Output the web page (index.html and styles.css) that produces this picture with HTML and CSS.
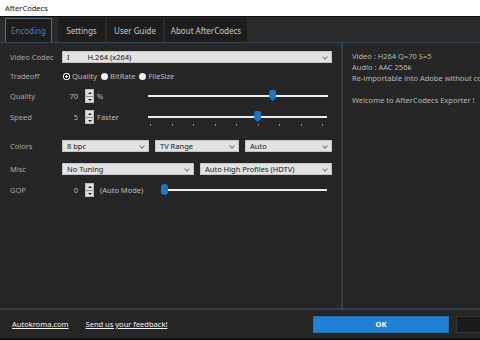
FILE: index.html
```html
<!DOCTYPE html>
<html lang="en">
<head>
    <meta charset="UTF-8">
    <title>AfterCodecs</title>
    <link rel="stylesheet" href="styles.css">
</head>
<body>
    <div class="window">
        <div class="titlebar">AfterCodecs</div>

        <div class="tabs">
            <div class="tab active t-enc">Encoding</div>
            <div class="tab t-set">Settings</div>
            <div class="tab t-guide">User Guide</div>
            <div class="tab t-about">About AfterCodecs</div>
        </div>

        <div class="main">
            <div class="left">
                <div class="row r-codec">
                    <span class="label">Video Codec</span>
                    <div class="select w-full"><span class="sep">I</span><span>H.264 (x264)</span><i class="chev"></i></div>
                </div>

                <div class="row r-trade">
                    <span class="label">Tradeoff</span>
                    <label class="radio-item"><span class="radio on"></span>Quality</label>
                    <label class="radio-item"><span class="radio"></span>BitRate</label>
                    <label class="radio-item"><span class="radio"></span>FileSize</label>
                </div>

                <div class="row r-quality">
                    <span class="label">Quality</span>
                    <span class="num">70</span>
                    <span class="spin"><b class="up"></b><b class="down"></b></span>
                    <span class="unit">%</span>
                    <div class="slider s-quality"><span class="thumb" style="left: 69%"></span></div>
                </div>

                <div class="row r-speed">
                    <span class="label">Speed</span>
                    <span class="num">5</span>
                    <span class="spin"><b class="up"></b><b class="down"></b></span>
                    <span class="unit">Faster</span>
                    <div class="slider s-speed">
                        <span class="thumb" style="left: 61%"></span>
                        <div class="ticks"><i></i><i></i><i></i><i></i><i></i><i></i><i></i><i></i><i></i></div>
                    </div>
                </div>

                <div class="row r-colors">
                    <span class="label">Colors</span>
                    <div class="select w-a"><span>8 bpc</span><i class="chev"></i></div>
                    <div class="select w-b"><span>TV Range</span><i class="chev"></i></div>
                    <div class="select w-c"><span>Auto</span><i class="chev"></i></div>
                </div>

                <div class="row r-misc">
                    <span class="label">Misc</span>
                    <div class="select w-half"><span>No Tuning</span><i class="chev"></i></div>
                    <div class="select w-half"><span>Auto High Profiles (HDTV)</span><i class="chev"></i></div>
                </div>

                <div class="row r-gop">
                    <span class="label">GOP</span>
                    <span class="num">0</span>
                    <span class="spin"><b class="up"></b><b class="down"></b></span>
                    <span class="unit gop-unit">(Auto Mode)</span>
                    <div class="slider s-gop"><span class="thumb round" style="left: 1%"></span></div>
                </div>
            </div>

            <div class="right">
                <p>Video : H264 Q=70 S=5</p>
                <p>Audio : AAC 256k</p>
                <p>Re-importable into Adobe without compression</p>
                <p>&nbsp;</p>
                <p>Welcome to AfterCodecs Exporter !</p>
            </div>
        </div>

        <div class="footer">
            <a class="link" href="#">Autokroma.com</a>
            <a class="link" href="#">Send us your feedback!</a>
            <button class="ok-btn">OK</button>
            <button class="cancel-btn"></button>
        </div>
    </div>
</body>
</html>
```

FILE: styles.css
```css
/* General Reset */
* {
    margin: 0;
    padding: 0;
    box-sizing: border-box;
}

body {
    background-color: #262626;
    font-family: 'Noto Sans', 'Open Sans', sans-serif;
    font-size: 7.5px;
    color: #b4b4b4;
    width: 480px;
    height: 340px;
    overflow: hidden;
}

.window {
    display: flex;
    flex-direction: column;
    height: 340px;
    border-bottom: 2px solid #0c0c0c;
}

.titlebar {
    height: 17px;
    background-color: #ffffff;
    color: #111111;
    padding-left: 5px;
    line-height: 16px;
    font-size: 7.5px;
    border-bottom: 1px solid #0e0e0e;
}

/* Tabs */
.tabs {
    display: flex;
    align-items: flex-end;
    height: 26px;
    padding-left: 5px;
    background-color: #2a2a2a;
    border-bottom: 1px solid #34495a;
}

.tab {
    height: 24px;
    line-height: 24px;
    text-align: center;
    font-size: 8px;
    background-color: #1d1d1d;
    color: #c8c8c8;
    border: 1px solid #1d1d1d;
    border-bottom: none;
}

.tab.active {
    color: #4b7fb4;
    border-color: #5a6c7a;
}

.t-enc { width: 47px; }
.t-set { width: 47px; margin-left: 6px; }
.t-guide { width: 56px; margin-left: 2px; }
.t-about { width: 82px; margin-left: 2px; }

/* Main area */
.main {
    display: flex;
    height: 265px;
}

.left {
    width: 343px;
    border-right: 2px solid #2f3f4c;
    padding: 8px 9px 0 10px;
}

.row {
    display: flex;
    align-items: center;
    white-space: nowrap;
}

.label {
    width: 52px;
    flex-shrink: 0;
    color: #a8a8a8;
}

.r-codec { height: 12px; }
.r-trade { height: 12px; margin-top: 7px; }
.r-quality { height: 14px; margin-top: 7px; }
.r-speed { height: 14px; margin-top: 7px; }
.r-colors { height: 12px; margin-top: 16px; }
.r-misc { height: 12px; margin-top: 11px; }
.r-gop { height: 14px; margin-top: 8px; }

/* Dropdowns */
.select {
    position: relative;
    height: 12px;
    background-color: #e2e2e2;
    border: 1px solid #c4c4c4;
    color: #151515;
    line-height: 10px;
    padding-left: 4px;
    white-space: nowrap;
}

.select .sep {
    margin-right: 18px;
}

.chev {
    position: absolute;
    right: 4px;
    top: 3px;
    width: 4px;
    height: 4px;
    border-right: 1px solid #777777;
    border-bottom: 1px solid #777777;
    transform: rotate(45deg);
}

.w-full { width: 270px; }
.w-a { width: 87px; }
.w-b { width: 84px; margin-left: 6px; }
.w-c { width: 87px; margin-left: 6px; }
.w-half { width: 132px; }
.w-half + .w-half { margin-left: 6px; }

/* Radio buttons */
.radio-item {
    display: flex;
    align-items: center;
    margin-right: 4px;
    color: #bdbdbd;
}

.radio-item:first-of-type {
    margin-left: 1px;
}

.radio {
    width: 7px;
    height: 7px;
    border-radius: 50%;
    background-color: #f0f0f0;
    margin-right: 2px;
}

.radio.on {
    background: radial-gradient(circle, #ffffff 0 1px, #1a1a1a 1.4px 2.3px, #ffffff 2.7px);
}

/* Number + spinner */
.num {
    width: 16px;
    text-align: right;
    color: #bdbdbd;
}

.spin {
    display: flex;
    flex-direction: column;
    width: 9px;
    height: 14px;
    margin-left: 7px;
    background-color: #dedede;
    border: 1px solid #bcbcbc;
}

.spin b {
    flex: 1;
    position: relative;
}

.spin .up {
    border-bottom: 1px solid #8a8a8a;
}

.spin b::after {
    content: "";
    position: absolute;
    left: 2px;
    top: 2px;
    border-left: 2px solid transparent;
    border-right: 2px solid transparent;
}

.spin .up::after {
    border-bottom: 2px solid #222222;
}

.spin .down::after {
    border-top: 2px solid #222222;
}

.unit {
    width: 54px;
    flex-shrink: 0;
    padding-left: 3px;
    color: #bdbdbd;
}

.gop-unit {
    width: 68px;
    padding-left: 6px;
}

/* Sliders */
.slider {
    position: relative;
    height: 2px;
    background-color: #ececec;
}

.s-quality { width: 180px; }
.s-speed { width: 179px; }
.s-gop { width: 165px; }

.thumb {
    position: absolute;
    top: -5px;
    width: 7px;
    height: 11px;
    margin-left: -3px;
    background-color: #1f74c4;
    border-radius: 2px 2px 3px 3px;
    clip-path: polygon(0 0, 100% 0, 100% 70%, 50% 100%, 0 70%);
}

.thumb.round {
    clip-path: none;
    border-radius: 4px;
    width: 7px;
}

.ticks {
    position: absolute;
    top: 8px;
    left: 2px;
    right: 4px;
    display: flex;
    justify-content: space-between;
}

.ticks i {
    width: 1px;
    height: 2px;
    background-color: #8a8a8a;
}

/* Log panel */
.right {
    flex: 1;
    padding: 8px 0 0 9px;
    white-space: nowrap;
    overflow: hidden;
    color: #b8b8b8;
}

.right p {
    line-height: 11px;
}

/* Footer */
.footer {
    flex: 1;
    display: flex;
    align-items: center;
    border-top: 2px solid #2f3f4c;
    padding-left: 12px;
}

.link {
    color: #f2f2f2;
    text-decoration: underline;
    margin-right: 17px;
}

.ok-btn {
    margin-left: auto;
    width: 136px;
    height: 17px;
    border: 1px solid #2a6fae;
    background-color: #1f80d6;
    color: #ffffff;
    font-family: inherit;
    font-size: 7.5px;
    font-weight: 700;
}

.cancel-btn {
    margin-left: 7px;
    width: 24px;
    height: 17px;
    background-color: #1b1b1b;
    border: 1px solid #333333;
    border-right: none;
}
```
